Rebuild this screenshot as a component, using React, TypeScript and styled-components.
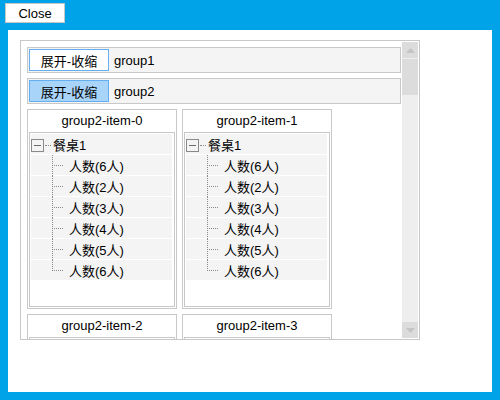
import React from 'react';
import styled, { createGlobalStyle } from 'styled-components';

const GlobalStyle = createGlobalStyle`
  html, body {
    margin: 0;
    padding: 0;
    background: #00a2e8;
    font-family: "Liberation Sans", "Noto Sans CJK SC", Arial, sans-serif;
    font-size: 13px;
    color: #000;
  }
`;

const Page = styled.div`
  width: 500px;
  height: 400px;
  display: flex;
  flex-direction: column;
  background: #00a2e8;
`;

const TopBar = styled.div`
  height: 30px;
  padding: 3px 0 0 5px;
  box-sizing: border-box;
`;

const CloseButton = styled.button`
  width: 60px;
  height: 20px;
  padding: 0;
  background: #fff;
  border: 1px solid #c6c6c6;
  font-family: inherit;
  font-size: 13px;
  color: #000;
`;

const Panel = styled.div`
  margin: 0 8px 8px 8px;
  height: 362px;
  background: #fff;
  padding: 10px 0 0 12px;
  box-sizing: border-box;
`;

const ScrollBox = styled.div`
  width: 400px;
  height: 300px;
  border: 1px solid #c8c8c8;
  box-sizing: border-box;
  display: flex;
`;

const Content = styled.div`
  flex: 1;
  overflow: hidden;
  padding: 6px 0 0 6px;
  display: flex;
  flex-direction: column;
  gap: 5px;
`;

const ScrollBar = styled.div`
  width: 17px;
  padding: 1px 1px 1px 0;
  box-sizing: border-box;
  display: flex;
  flex-direction: column;
  background: #fff;
`;

const ScrollTrack = styled.div`
  flex: 1;
  display: flex;
  flex-direction: column;
  background: #eeeeee;
`;

const ArrowButton = styled.div<{ $down?: boolean }>`
  height: 16px;
  background: #dcdcdc;
  display: flex;
  align-items: center;
  justify-content: center;
  margin-bottom: ${p => (p.$down ? 0 : 1)}px;
  margin-top: ${p => (p.$down ? 'auto' : 0)};
`;

const Thumb = styled.div`
  height: 36px;
  background: #dcdcdc;
`;

const GroupRow = styled.div`
  width: 374px;
  height: 26px;
  border: 1px solid #c8c8c8;
  box-sizing: border-box;
  background: #f4f4f4;
  padding: 1px;
  display: flex;
  align-items: center;
  gap: 5px;
`;

const ToggleButton = styled.button<{ $active?: boolean }>`
  width: 80px;
  height: 22px;
  padding: 0;
  border: 1px solid #62aef0;
  background: ${p => (p.$active ? '#a9d4f9' : '#fff')};
  font-family: inherit;
  font-size: 13px;
  color: #000;
`;

const GroupName = styled.span`
  font-size: 13px;
`;

const CardGrid = styled.div`
  display: flex;
  flex-wrap: wrap;
  gap: 5px;
  width: 374px;
`;

const Card = styled.div`
  width: 150px;
  height: 200px;
  border: 1px solid #c8c8c8;
  box-sizing: border-box;
  padding: 0 1px 1px 1px;
  display: flex;
  flex-direction: column;
  flex-shrink: 0;
`;

const CardTitle = styled.div`
  height: 22px;
  line-height: 22px;
  text-align: center;
  font-size: 13px;
`;

const TreeBox = styled.div`
  flex: 1;
  border: 1px solid #c8c8c8;
  padding: 1px 2px 1px 1px;
  display: flex;
  flex-direction: column;
  gap: 1px;
`;

const TreeRow = styled.div`
  height: 20px;
  background: #f4f4f4;
  display: flex;
  align-items: center;
  font-size: 13px;
`;

const ExpandBox = styled.span`
  width: 13px;
  height: 13px;
  border: 1px solid #8a8a8a;
  box-sizing: border-box;
  display: flex;
  align-items: center;
  justify-content: center;
  margin-top: 2px;

  &::after {
    content: '';
    width: 7px;
    height: 1px;
    background: #6a6a6a;
  }
`;

const RootDots = styled.span`
  width: 6px;
  border-top: 1px dotted #8a8a8a;
  margin: 2px 2px 0 1px;
`;

const Connector = styled.span<{ $last?: boolean }>`
  position: relative;
  width: 10px;
  margin-left: 21px;
  margin-right: 6px;
  align-self: flex-start;
  height: ${p => (p.$last ? 11 : 21)}px;
  border-left: 1px dotted #8a8a8a;

  &::after {
    content: '';
    position: absolute;
    left: 1px;
    top: 10px;
    width: 9px;
    border-top: 1px dotted #8a8a8a;
  }
`;

const counts = [6, 2, 3, 4, 5, 6];

const UpArrow = () => (
  <svg width="9" height="5" viewBox="0 0 9 5">
    <polygon points="0,5 9,5 4.5,0" fill="#c4c4c4" />
  </svg>
);

const DownArrow = () => (
  <svg width="9" height="5" viewBox="0 0 9 5">
    <polygon points="0,0 9,0 4.5,5" fill="#c4c4c4" />
  </svg>
);

const TreeCard: React.FC<{ title: string }> = ({ title }) => (
  <Card>
    <CardTitle>{title}</CardTitle>
    <TreeBox>
      <TreeRow>
        <ExpandBox />
        <RootDots />
        餐桌1
      </TreeRow>
      {counts.map((n, i) => (
        <TreeRow key={i}>
          <Connector $last={i === counts.length - 1} />
          人数({n}人)
        </TreeRow>
      ))}
    </TreeBox>
  </Card>
);

const App: React.FC = () => {
  return (
    <Page>
      <GlobalStyle />
      <TopBar>
        <CloseButton>Close</CloseButton>
      </TopBar>
      <Panel>
        <ScrollBox>
          <Content>
            <GroupRow>
              <ToggleButton>展开-收缩</ToggleButton>
              <GroupName>group1</GroupName>
            </GroupRow>
            <GroupRow>
              <ToggleButton $active>展开-收缩</ToggleButton>
              <GroupName>group2</GroupName>
            </GroupRow>
            <CardGrid>
              {[0, 1, 2, 3].map(i => (
                <TreeCard key={i} title={`group2-item-${i}`} />
              ))}
            </CardGrid>
          </Content>
          <ScrollBar>
            <ScrollTrack>
              <ArrowButton>
                <UpArrow />
              </ArrowButton>
              <Thumb />
              <ArrowButton $down>
                <DownArrow />
              </ArrowButton>
            </ScrollTrack>
          </ScrollBar>
        </ScrollBox>
      </Panel>
    </Page>
  );
};

export default App;
